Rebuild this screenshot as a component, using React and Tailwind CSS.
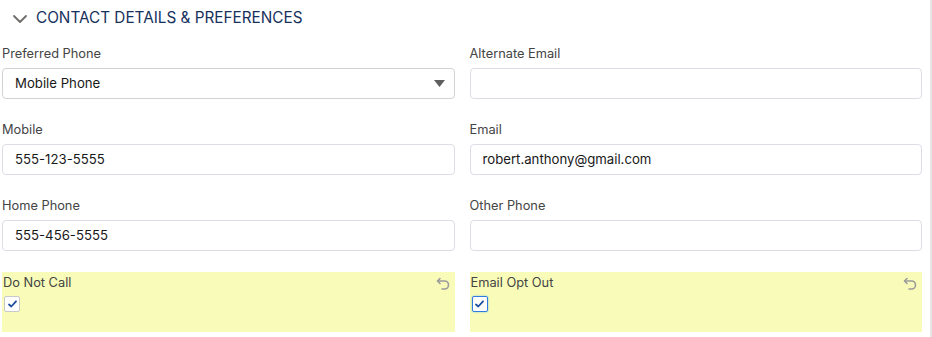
import React from 'react'

function Label({ children }) {
  return <div className="h-[18px] pt-[1px] leading-[18px] text-[12.8px] text-[#444444]">{children}</div>
}

function TextField({ label, value }) {
  return (
    <div>
      <Label>{label}</Label>
      <div className="mt-[6px] h-[31px] rounded-[4px] border border-[#dcdde6] bg-white px-[12px] flex items-center text-[13.2px] text-[#181818]">
        {value}
      </div>
    </div>
  )
}

function SelectField({ label, value }) {
  return (
    <div>
      <Label>{label}</Label>
      <div className="mt-[6px] h-[31px] rounded-[4px] border border-[#d2d2d2] bg-white pl-[12px] pr-[9px] flex items-center justify-between text-[13.2px] text-[#181818]">
        <span>{value}</span>
        <svg width="11" height="7" viewBox="0 0 11 7">
          <path d="M0 0 L11 0 L5.5 7 Z" fill="#5f5f5f" />
        </svg>
      </div>
    </div>
  )
}

function UndoIcon() {
  return (
    <svg width="14" height="14" viewBox="0 0 14 14" fill="none" stroke="#9b9b9b" strokeWidth="1.6" strokeLinecap="round" strokeLinejoin="round">
      <path d="M4 1.5 L1.5 4 L4 6.5" />
      <path d="M1.8 4 H8.5 a4 4 0 0 1 0 8 H6" />
    </svg>
  )
}

function CheckField({ label, focused }) {
  return (
    <div className="h-[60px] bg-[#f8fcb8] pl-[1px] pr-[5px]">
      <div className="flex items-start justify-between pt-[1px]">
        <Label>{label}</Label>
        <div className="pt-[4px]">
          <UndoIcon />
        </div>
      </div>
      <div
        className={
          focused
            ? 'mt-[5px] ml-[1px] h-[16px] w-[16px] rounded-[2px] border border-[#2f7ce0] bg-white flex items-center justify-center shadow-[0_0_2px_#7fb2f0]'
            : 'mt-[5px] ml-[1px] h-[16px] w-[16px] rounded-[2px] border border-[#c9c9c9] bg-white flex items-center justify-center'
        }
      >
        <svg width="9" height="8" viewBox="0 0 9 8" fill="none" stroke="#1d4f9c" strokeWidth="1.8" strokeLinecap="round" strokeLinejoin="round">
          <path d="M1 4.5 L3.3 6.5 L8 1.3" />
        </svg>
      </div>
    </div>
  )
}

export default function App() {
  return (
    <div
      className="w-[932px] h-[337px] bg-white border-r-2 border-[#e6e6e6] pl-[2px] pr-[8px]"
      style={{ fontFamily: 'Inter, "Liberation Sans", sans-serif' }}
    >
      {/* Header */}
      <div className="h-[36px] pt-[1px] flex items-center pl-[11px]">
        <svg width="14" height="8" viewBox="0 0 14 8" fill="none" stroke="#706e6b" strokeWidth="1.8" strokeLinecap="round" strokeLinejoin="round">
          <path d="M1 1 L7 7 L13 1" />
        </svg>
        <span className="ml-[9px] text-[15.3px] text-[#16325c]">CONTACT DETAILS &amp; PREFERENCES</span>
      </div>

      <div className="mt-[8px] grid grid-cols-2 gap-x-[15px] gap-y-[21px]">
        <SelectField label="Preferred Phone" value="Mobile Phone" />
        <TextField label="Alternate Email" value="" />
        <TextField label="Mobile" value="555-123-5555" />
        <TextField label="Email" value="robert.anthony@gmail.com" />
        <TextField label="Home Phone" value="555-456-5555" />
        <TextField label="Other Phone" value="" />
        <CheckField label="Do Not Call" />
        <CheckField label="Email Opt Out" focused />
      </div>
    </div>
  )
}
